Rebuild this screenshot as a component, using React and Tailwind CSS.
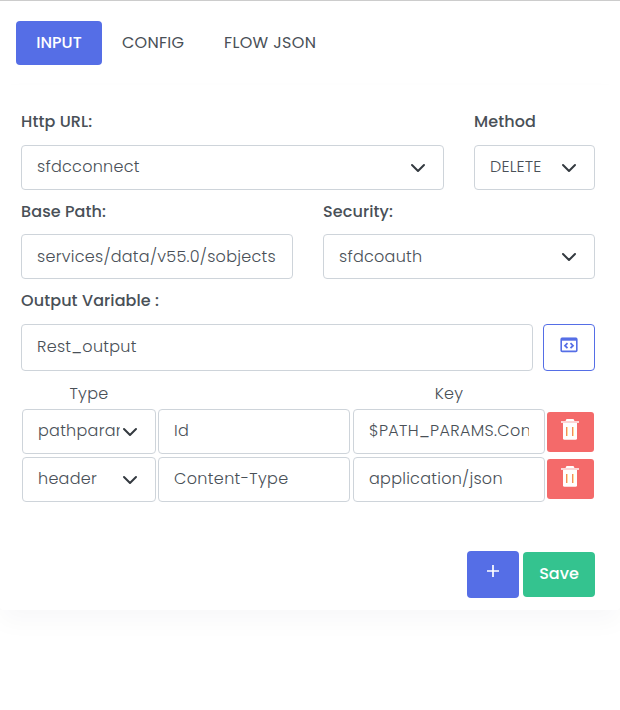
const font = "font-['Poppins','Inter',sans-serif]";
const box = 'flex items-center overflow-hidden whitespace-nowrap rounded border border-[#ced4da] bg-white px-[15px] font-light';

function Chevron() {
  return (
    <svg viewBox="0 0 16 16" className="ml-auto mr-[2px] h-4 w-4 shrink-0" fill="none" stroke="#343a40" strokeWidth="2" strokeLinecap="round" strokeLinejoin="round">
      <path d="M2 5l6 6 6-6" />
    </svg>
  );
}

function Field({ text, className = '', track = 'tracking-[0.27px]', top = '-top-px', select = false }) {
  return (
    <div className={`${box} ${className}`}>
      <span className={`relative overflow-hidden ${top} ${track}`}>{text}</span>
      {select && <Chevron />}
    </div>
  );
}

function Label({ text, track = 'tracking-[0.1px]' }) {
  return <div className={`h-6 pt-px font-medium leading-6 whitespace-nowrap ${track}`}>{text}</div>;
}

function Trash() {
  return (
    <button className="flex h-10 w-[47px] justify-center rounded-[3px] bg-[#f46a6a] pr-px pt-[7px]">
      <svg viewBox="0 0 18 21" className="h-[21px] w-[18px]">
        <path d="M5.5 0h7l1 2h-9z" fill="#fff" />
        <path d="M0 2h18v2H0z" fill="#fcd5d5" />
        <path d="M2 4h14v15.2a1.5 1.5 0 0 1-1.5 1.5h-11A1.5 1.5 0 0 1 2 19.200z" fill="#fff" />
        <path d="M5 8h1v9H5zM11 8h1v9h-1z" fill="#f28a62" />
        <path d="M6 8h1v9H6zM12 8h1v9h-1z" fill="#ffdf9a" />
      </svg>
    </button>
  );
}

export default function App() {
  return (
    <div className={`h-[710px] w-[620px] overflow-hidden border-t border-[#ccc] bg-white text-base text-[#495057] ${font}`}>
      <nav className="flex h-[84px] items-start px-4 pt-5 font-normal">
        <div className="flex h-11 w-[86px] items-center justify-center rounded bg-[#556ee6] font-medium text-white">INPUT</div>
        <div className="flex h-11 items-center pl-5"><span className="w-[102px] tracking-[0.25px]">CONFIG</span></div>
        <div className="flex h-11 items-center tracking-[0.35px]">FLOW JSON</div>
      </nav>
      <main className="flex h-[525px] flex-col rounded bg-white px-[21px] pt-6 shadow-[0_12px_24px_rgba(18,38,63,0.03)]">
        <div className="flex gap-[30px]">
          <div><Label text="Http URL:" /><Field select text="sfdcconnect" className="mt-3 h-[45px] w-[423px]" /></div>
          <div><Label text="Method" /><Field select text="DELETE" track="tracking-[0.17px]" className="mt-3 h-[45px] w-[121px]" /></div>
        </div>
        <div className="mt-[9px] flex gap-[30px]">
          <div><Label text="Base Path:" /><Field top="top-0" text="services/data/v55.0/sobjects" className="mt-[11px] h-[45px] w-[272px]" /></div>
          <div><Label text="Security:" /><Field top="top-0" select text="sfdcoauth" className="mt-[11px] h-[45px] w-[272px]" /></div>
        </div>
        <div className="mt-[9px]"><Label text="Output Variable :" /></div>
        <div className="mt-3 flex gap-[10px]">
          <Field text="Rest_output" className="h-[47px] w-[512px]" />
          <button className="flex h-[47px] w-[52px] justify-center rounded border border-[#556ee6] pt-3">
            <svg viewBox="0 0 18 16" className="h-4 w-[18px]" fill="none" stroke="#556ee6">
              <rect x="1.200" y="1.200" width="15.600" height="13.200" rx="1" strokeWidth="1.600" />
              <path d="M1 2.300h16" strokeWidth="2.800" />
              <path d="M7.500 6.200 5 8.700l2.500 2.500M10.500 6.200 13 8.700l-2.500 2.500" strokeWidth="1.800" />
            </svg>
          </button>
        </div>
        <div className="mt-[10px] flex h-6 pt-px font-light leading-6">
          <div className="w-[136px] text-center tracking-[0.3px]">Type</div>
          <div className="w-[195px]" />
          <div className="w-[194px] text-center tracking-[0.3px]">Key</div>
        </div>
        <div className="mt-1 flex flex-col gap-[3px] pl-px">
          <div className="flex h-[45px]">
            <Field select text={<span className="block w-[82px] overflow-hidden">pathparam</span>} className="w-[134px]" />
            <Field text="Id" className="ml-[2px] w-[192px]" />
            <Field text="$PATH_PARAMS.ContactId" track="tracking-[0.35px]" className="ml-[3px] w-[192px]" />
            <div className="ml-[2px] pt-[3px]"><Trash /></div>
          </div>
          <div className="flex h-[45px]">
            <Field select text="header" className="w-[134px]" />
            <Field text="Content-Type" track="tracking-[0.35px]" className="ml-[2px] w-[192px]" />
            <Field text="application/json" className="ml-[3px] w-[192px]" />
            <div className="ml-[2px] pt-[2px]"><Trash /></div>
          </div>
        </div>
        <div className="mt-[49px] flex items-center justify-end gap-1 pr-1 font-medium text-white">
          <button className="flex h-[47px] w-[52px] justify-center rounded bg-[#556ee6] pt-[14px]">
            <svg viewBox="0 0 12 12" className="h-3 w-3" stroke="#fff" strokeWidth="1.700"><path d="M6 0v12M0 6h12" /></svg>
          </button>
          <button className="h-[45px] w-[72px] rounded bg-[#34c38f] pb-[2px]">Save</button>
        </div>
      </main>
    </div>
  );
}
